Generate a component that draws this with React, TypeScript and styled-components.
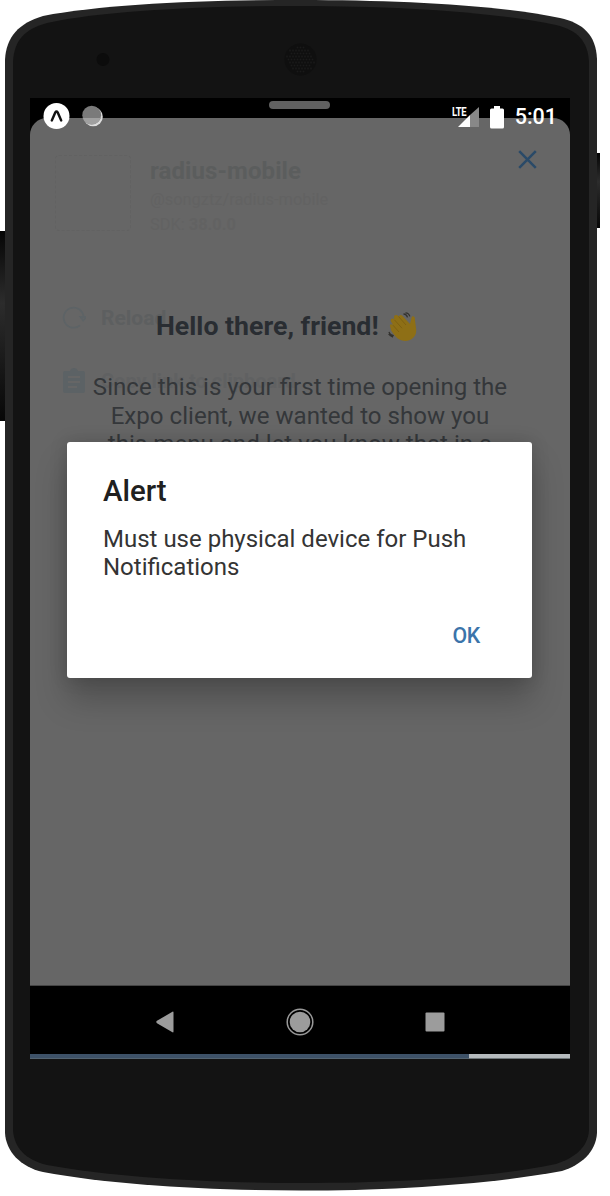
import React from 'react';
import styled, { createGlobalStyle } from 'styled-components';

const Global = createGlobalStyle`
  * { box-sizing: border-box; }
  body { margin: 0; background: #fff; font-family: Roboto, "Liberation Sans", sans-serif; }
  h1, h2, p { margin: 0; }
`;

const Device = styled.main`
  position: relative;
  width: 600px;
  height: 1196px;
  padding: 98px 30px 0;
  overflow: hidden;
`;

const Shell = styled.svg`
  position: absolute;
  left: 0;
  top: 0;
`;

const Screen = styled.section`
  position: relative;
  width: 540px;
  height: 961px;
  padding-top: 20px;
  background: #000;
  display: flex;
  flex-direction: column;
`;

const Handle = styled.div`
  position: absolute;
  left: 239px;
  top: 3px;
  width: 61px;
  height: 8px;
  border-radius: 4px;
  background: #616161;
`;

const StatusBar = styled.header`
  position: absolute;
  inset: 0 0 auto 0;
  height: 37px;
  padding: 1px 13px 0;
  display: flex;
  align-items: center;
  justify-content: space-between;
  color: #fff;
`;

const Clock = styled.time`
  font-size: 21.5px;
  font-weight: 500;
  line-height: 36px;
`;

const StatusGroup = styled.div`
  display: flex;
  align-items: center;
  gap: 11px;
`;

const Signal = styled.div`
  position: relative;
  display: flex;
  width: 28px;
  height: 24px;
`;

const NetworkLabel = styled.span`
  position: absolute;
  left: 1px;
  top: -1px;
  font: 700 13.5px/14px Roboto, sans-serif;
  letter-spacing: -0.4px;
  transform: scaleX(0.7);
  transform-origin: left;
`;

const Sheet = styled.div`
  position: relative;
  height: 868px;
  border-radius: 17px 17px 0 0;
  border-bottom: 1px solid #444;
  background: #666;
  overflow: hidden;
`;

const AppInfo = styled.div`
  display: flex;
  gap: 19px;
  padding: 37px 24px 0 25px;
`;

const AppIcon = styled.div`
  width: 76px;
  height: 76px;
  border: 1px dashed #626262;
  border-radius: 4px;
`;

const AppMeta = styled.div`
  color: #626262;
  font-size: 16.4px;
  line-height: 25px;
`;

const AppName = styled.h2`
  color: #5b5d5d;
  font-size: 24px;
  font-weight: 700;
  line-height: 32px;
  letter-spacing: 0.1px;
`;

const Close = styled.svg`
  position: absolute;
  left: 487px;
  top: 31px;
`;

const Menu = styled.div`
  display: flex;
  flex-direction: column;
  gap: 33px;
  padding: 66px 32px 0;
`;

const MenuItem = styled.div<{ $faint?: boolean }>`
  display: flex;
  align-items: center;
  gap: 15px;
  height: 30px;
  color: ${(p) => (p.$faint ? '#606162' : '#5d5f60')};
  font: 700 ${(p) => (p.$faint ? '20px' : '21px')}/30px Roboto, sans-serif;
`;

const Onboarding = styled.div`
  position: absolute;
  inset: 191px 0 auto;
  text-align: center;
  color: #292d32;
`;

const Greeting = styled.h1`
  display: flex;
  align-items: center;
  gap: 9px;
  padding-left: 126px;
  font-size: 26.7px;
  line-height: 35px;
  white-space: nowrap;
`;

const Intro = styled.p`
  margin-top: 29px;
  color: #34373a;
  font-size: 24.1px;
  line-height: 28.6px;
  white-space: nowrap;
`;

const Alert = styled.div`
  position: absolute;
  left: 37px;
  top: 344px;
  width: 465px;
  height: 235.5px;
  padding: 31px 36px 26.5px;
  display: flex;
  flex-direction: column;
  border-radius: 3px;
  background: #fff;
  box-shadow: 0 22px 32px rgba(0, 0, 0, 0.22), 0 0 18px rgba(0, 0, 0, 0.16);
`;

const AlertTitle = styled.h2`
  color: #202020;
  font-size: 29.4px;
  font-weight: 500;
  line-height: 36px;
`;

const AlertText = styled.p`
  margin-top: 16px;
  color: #343434;
  font-size: 24px;
  line-height: 28.4px;
  white-space: nowrap;
`;

const AlertButton = styled.button`
  align-self: flex-end;
  margin-top: auto;
  margin-right: 16px;
  padding: 0;
  border: 0;
  background: none;
  color: #3b74aa;
  font: 500 21.3px/30px Roboto, sans-serif;
  letter-spacing: -0.3px;
`;

const NavBar = styled.nav`
  height: 68px;
  display: flex;
  align-items: center;
  justify-content: center;
  gap: 107px;
  padding: 4px 1px 0 0;
`;

const Progress = styled.div`
  height: 5px;
  background: #b5babd;
  border-bottom: 1px solid #6d7578;
`;

const ProgressValue = styled.div`
  width: 439px;
  height: 5px;
  background: #3d5167;
  border-bottom: 1px solid #536370;
`;

const outline = 'M5 60 C6 37 19 23 43 16 C105 4 205 0 301 0 C397 0 499 5 560 18 C583 23 596 35 597 59 V1133 C596 1152 581 1165 562 1171 C492 1184 394 1190.5 301 1190.5 C210 1190.5 112 1185 43 1172 C20 1167 6 1151 5 1133 Z';
const face = 'M13 62 C14 40 25 29 47 23 C108 10 207 6 301 6 C395 6 495 12 556 25 C577 30 588 41 589 62 V1130 C588 1148 574 1158 556 1164 C490 1178 392 1183 301 1183 C210 1183 112 1177 47 1165 C25 1160 14 1147 13 1130 Z';

function Phone() {
  const holes = [];
  for (let r = -4; r <= 4; r++) {
    for (let c = -4; c <= 4; c++) {
      if (r * r + c * c < 20) {
        holes.push(<circle key={`${r}:${c}`} cx={300.5 + c * 3 + (r % 2) * 1.5} cy={59.5 + r * 3} r="0.9" />);
      }
    }
  }
  return (
    <Shell width="600" height="1196" viewBox="0 0 600 1196">
      <defs>
        <linearGradient id="side" x1="0" y1="0" x2="0" y2="1">
          <stop offset="0" stopColor="#050505" />
          <stop offset=".38" stopColor="#2c2c2c" />
          <stop offset="1" stopColor="#070707" />
        </linearGradient>
      </defs>
      <rect x="-3" y="231" width="11" height="190" rx="2" fill="url(#side)" />
      <rect x="594" y="153" width="9" height="75" rx="2" fill="url(#side)" />
      <path d={outline} fill="#252525" />
      <path d={face} fill="#131313" />
      <circle cx="103" cy="59.5" r="6.5" fill="#0c0c0c" />
      <circle cx="300.5" cy="59.5" r="16" fill="#0f0f0f" />
      <g fill="#1a1a1a">{holes}</g>
    </Shell>
  );
}

function StatusIcons() {
  return (
    <svg width="62" height="30" viewBox="0 0 62 30">
      <circle cx="13.5" cy="14" r="13" fill="#fff" />
      <path d="M8.8 18.5 12.3 10.4Q13.5 8.6 14.7 10.4L18.2 18.5" fill="none" stroke="#111" strokeWidth="2.4" strokeLinecap="round" />
      <circle cx="50.2" cy="14.7" r="9.6" fill="#ddd" />
      <circle cx="48.7" cy="13.2" r="9.4" fill="#7a7a7a" />
      <path d="M39.8 16H57.6A9.4 9.4 0 0 1 39.8 16" fill="#a0a0a0" />
    </svg>
  );
}

function WavingHand() {
  return (
    <svg width="29" height="30" viewBox="0 0 29 30">
      <path d="M2.5 15.5C.8 13 3 11.2 5 13L3 9.5C1.8 7 4.6 5.4 6.4 7.6L6 6C5.4 3 8.6 2 10.6 4.4Q12.2 1.6 14.8 4.2L22 12 23.6 5.6C24.3 3.2 27.2 4 26.9 7.4L28 16C29.6 24.5 23 29 17.5 29C11.5 29 7.5 25.5 3.2 18.5Z" fill="#8e6f16" />
      <path d="M5 13.2 11 20M6.6 8 14 16.2M10.6 4.6 18 13" fill="none" stroke="#7a5c10" strokeWidth=".8" />
      <path d="M15.5 2Q18.5 2 19.5 5.4M17.5 .8Q21 1 21.8 4.4M1 20Q2 23.4 5.8 23.6M.6 22Q2.4 24.6 5 25" fill="none" stroke="#33322f" strokeWidth="1.3" />
    </svg>
  );
}

export default function App() {
  return (
    <>
      <Global />
      <Device>
        <Phone />
        <Screen>
          <Handle />
          <Sheet>
            <AppInfo>
              <AppIcon />
              <AppMeta>
                <AppName>radius-mobile</AppName>
                <p>@songztz/radius-mobile</p>
                <p>SDK: <b>38.0.0</b></p>
              </AppMeta>
            </AppInfo>
            <Menu>
              <MenuItem>
                <svg width="24" height="24" viewBox="0 0 24 24" fill="none" stroke="#5d6366" strokeWidth="1.8">
                  <path d="M18 19.4A10 10 0 1 1 21.5 10M18.5 11H24L21.2 14.5Z" />
                </svg>
                Reload
              </MenuItem>
              <MenuItem $faint>
                <svg width="24" height="26" viewBox="0 0 24 26">
                  <path d="M3 3H8Q9 0 12 0Q15 0 16 3H21Q23 3 23 5V23Q23 25 21 25H3Q1 25 1 23V5Q1 3 3 3Z" fill="#5c6265" />
                  <path d="M6 9H18M6 14H18M6 19H15" stroke="#666" strokeWidth="2" />
                </svg>
                Copy link to clipboard
              </MenuItem>
            </Menu>
            <Close width="21" height="21" viewBox="0 0 21 21" fill="none" stroke="#2a4a68" strokeWidth="2.5">
              <path d="M2.2 2.2 18.8 18.8M18.8 2.2 2.2 18.8" />
            </Close>
            <Onboarding>
              <Greeting>Hello there, friend! <WavingHand /></Greeting>
              <Intro>
                Since this is your first time opening the<br />
                Expo client, we wanted to show you<br />
                this menu and let you know that in a
              </Intro>
            </Onboarding>
          </Sheet>
          <NavBar>
            <svg width="28" height="28" viewBox="0 0 28 28">
              <path d="M22.5 4.5V23.5Q22.5 25 21 24L6 15.2Q4.5 14 6 12.8L21 4Q22.5 3 22.5 4.5Z" fill="#9c9c9c" />
            </svg>
            <svg width="28" height="28" viewBox="0 0 28 28">
              <circle cx="14" cy="14" r="12.8" fill="none" stroke="#999" strokeWidth="1.5" />
              <circle cx="14" cy="14" r="10.3" fill="#9c9c9c" />
            </svg>
            <svg width="28" height="28" viewBox="0 0 28 28">
              <rect x="4.5" y="4.5" width="19" height="19" rx="1" fill="#9c9c9c" />
            </svg>
          </NavBar>
          <Progress><ProgressValue /></Progress>
          <StatusBar>
            <StatusIcons />
            <StatusGroup>
              <Signal>
                <NetworkLabel>LTE</NetworkLabel>
                <svg width="28" height="24" viewBox="0 0 28 24">
                  <path d="M19 10V22H7Z" fill="#fff" />
                  <path d="M19 10 28 2V22H19Z" fill="#888" />
                </svg>
              </Signal>
              <svg width="14" height="23" viewBox="0 0 14 23">
                <path d="M4 0H10V2.5H12.5Q14 2.5 14 4V21Q14 22.5 12.5 22.5H1.5Q0 22.5 0 21V4Q0 2.5 1.5 2.5H4Z" fill="#fff" />
              </svg>
              <Clock>5:01</Clock>
            </StatusGroup>
          </StatusBar>
          <Alert role="alertdialog">
            <AlertTitle>Alert</AlertTitle>
            <AlertText>Must use physical device for Push<br />Notifications</AlertText>
            <AlertButton>OK</AlertButton>
          </Alert>
        </Screen>
      </Device>
    </>
  );
}
